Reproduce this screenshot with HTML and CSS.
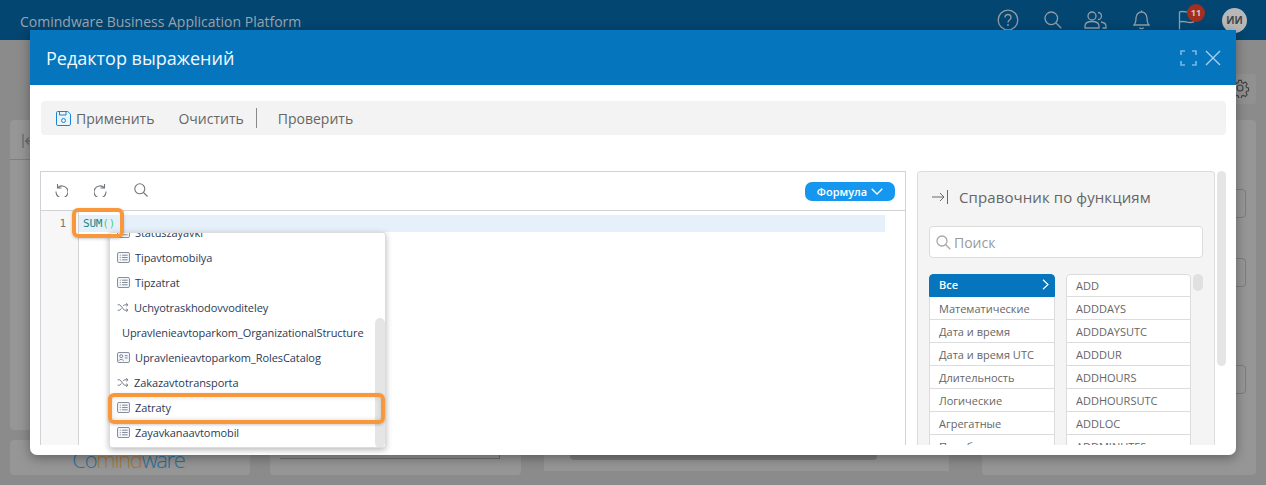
FILE: index.html
```html
<!DOCTYPE html>
<html lang="ru">
<head>
<meta charset="utf-8">
<title>Редактор выражений</title>
<link rel="stylesheet" href="styles.css">
</head>
<body>
<svg class="defs" width="0" height="0" aria-hidden="true">
  <symbol id="i-list" viewBox="0 0 14 12"><rect x="0.5" y="0.5" width="13" height="11" rx="1.5" fill="#f3f6fa" stroke="#77808c"/><path d="M3 3.5h1M3 6h1M3 8.5h1M5.5 3.5h6M5.5 6h6M5.5 8.5h6" stroke="#77808c" fill="none"/></symbol>
  <symbol id="i-shuffle" viewBox="0 0 13 10"><path d="M0 2h2.5l5 6H11M0 8h2.5l1.7-2M6 3.6 7.500 2H11M9.500 0.300 11.500 2 9.500 3.700M9.500 6.300 11.500 8 9.500 9.700" fill="none" stroke="#6e7680"/></symbol>
  <symbol id="i-person" viewBox="0 0 14 12"><rect x="0.500" y="0.500" width="13" height="11" rx="1.500" fill="#f3f6fa" stroke="#77808c"/><circle cx="4.500" cy="4.500" r="1.600" fill="none" stroke="#77808c"/><path d="M2 9.500c.5-2 4.500-2 5 0M8.500 4h3M8.500 6.500h3" fill="none" stroke="#77808c"/></symbol>
</svg>

<header class="topbar">
  <span class="app-title">Comindware Business Application Platform</span>
  <nav class="top-icons">
    <svg class="ti ti-help" viewBox="0 0 22 22"><circle cx="11" cy="11" r="9.800"/><path d="M8 8.500c0-4 6-4 6 0 0 2.500-3 2.500-3 5"/><circle class="dot" cx="11" cy="16" r="0.900"/></svg>
    <svg class="ti ti-search" viewBox="0 0 18 18"><circle cx="7.300" cy="7.300" r="6.300"/><path d="M12 12l5.300 5.300"/></svg>
    <svg class="ti ti-users" viewBox="0 0 23 18"><circle cx="8" cy="5" r="4"/><path d="M1 17v-2c0-3 3-4.500 7-4.500s7 1.500 7 4.500v2zM14 1.500a3.500 3.500 0 0 1 0 7M17 11c3 .5 5 1.800 5 4v2h-3.500"/></svg>
    <svg class="ti ti-bell" viewBox="0 0 17 20"><path d="M1 15c2-2 2-3.500 2-7 0-3.500 2.500-6 5.500-6s5.500 2.500 5.500 6c0 3.500 0 5 2 7zM8.500 2V.5M6.500 17.500c.5 1.500 3.500 1.500 4 0"/></svg>
    <span class="flag-wrap">
      <svg class="ti ti-flag" viewBox="0 0 17 20"><path d="M1.500 19.500V2c4-2 9 2 14 0v10c-5 2-10-2-14 0"/></svg>
      <span class="badge">11</span>
    </span>
    <span class="avatar">ИИ</span>
  </nav>
</header>

<main class="backdrop">
  <section class="card card-left">
    <div class="card-head"><svg class="collapse" viewBox="0 0 12 14"><path d="M1 0v14M11 7H4M7 3.500 3.500 7 7 10.500"/></svg></div>
  </section>
  <section class="card card-logo"><span class="logo">Co<span class="logo-mid">mind</span>ware</span></section>
  <section class="card card-second"><div class="inner-line"></div></section>
  <section class="card card-third"><div class="inner-bar"></div></section>
  <div class="right-col">
    <div class="gear-box">
      <svg class="gear" viewBox="0 0 20 20"><circle cx="10" cy="10" r="3"/><path d="M8.500 1.500h3l.5 2.500 1.800.8 2.200-1.400 2 2.100-1.400 2.200.8 1.800 2.100.5v3l-2.100.5-.8 1.800 1.400 2.200-2 2-2.200-1.300-1.800.7-.5 2.500h-3l-.5-2.500-1.800-.7-2.200 1.300-2-2 1.400-2.200-.8-1.800-2.100-.5v-3l2.100-.5.800-1.800-1.400-2.200 2-2.100 2.200 1.400 1.800-.8z" transform="translate(1 1) scale(.9)"/></svg>
    </div>
    <section class="card card-right">
      <div class="field f1"></div>
      <div class="field f2"></div>
      <div class="field f3"></div>
    </section>
  </div>
</main>

<div class="modal" role="dialog">
  <div class="modal-head">
    <h1 class="modal-title">Редактор выражений</h1>
    <div class="modal-actions">
      <svg class="maxi" viewBox="0 0 17 16"><path d="M1 5V1h4M12 1h4v4M16 11v4h-4M5 15H1v-4"/></svg>
      <svg class="close" viewBox="0 0 16 16"><path d="M1 1l14 14M15 1 1 15"/></svg>
    </div>
  </div>

  <div class="modal-body">
    <div class="toolbar">
      <button class="tb-btn tb-save">
        <svg class="save" viewBox="0 0 15 15"><path d="M1.800.5h10l2.700 2.700v10a1.300 1.300 0 0 1-1.300 1.300H1.800A1.300 1.300 0 0 1 .5 13.200V1.800A1.300 1.300 0 0 1 1.800.5zM3.500.5v3.500h6.500V.5"/><circle cx="7.500" cy="9.500" r="2"/></svg>
        Применить
      </button>
      <button class="tb-btn tb-clear">Очистить</button>
      <span class="tb-sep"></span>
      <button class="tb-btn tb-check">Проверить</button>
    </div>

    <div class="workspace">
      <section class="editor">
        <div class="ed-tools">
          <svg class="ed-i" viewBox="0 0 14 14"><path d="M3.500 1v4h4M3.600 4.800A6 6 0 1 1 2 8.500"/></svg>
          <svg class="ed-i" viewBox="0 0 14 14"><path d="M10.500 1v4h-4M10.400 4.800A6 6 0 1 0 12 8.500"/></svg>
          <svg class="ed-i" viewBox="0 0 14 14"><circle cx="5.800" cy="5.800" r="5"/><path d="M9.500 9.500l4 4"/></svg>
          <button class="mode">Формула<svg class="mode-chev" viewBox="0 0 12 7"><path d="M.7.700 6 6l5.300-5.300"/></svg></button>
        </div>
        <div class="code">
          <div class="gutter"><span class="ln">1</span></div>
          <div class="lines">
            <div class="active-line"><span class="fn">SUM</span><span class="par">()</span></div>
          </div>
        </div>

        <div class="ac">
          <ul class="ac-list">
            <li><svg class="ai"><use href="#i-list"/></svg>Statuszayavki</li>
            <li><svg class="ai"><use href="#i-list"/></svg>Tipavtomobilya</li>
            <li><svg class="ai"><use href="#i-list"/></svg>Tipzatrat</li>
            <li class="tight"><svg class="ai ai-s"><use href="#i-shuffle"/></svg>Uchyotraskhodovvoditeley</li>
            <li class="noicon">Upravlenieavtoparkom_OrganizationalStructure</li>
            <li><svg class="ai"><use href="#i-person"/></svg>Upravlenieavtoparkom_RolesCatalog</li>
            <li class="tight"><svg class="ai ai-s"><use href="#i-shuffle"/></svg>Zakazavtotransporta</li>
            <li><svg class="ai"><use href="#i-list"/></svg>Zatraty</li>
            <li><svg class="ai"><use href="#i-list"/></svg>Zayavkanaavtomobil</li>
          </ul>
          <span class="ac-thumb"></span>
        </div>
        <span class="mark mark-sum"></span>
        <span class="mark mark-row"></span>
      </section>

      <aside class="ref">
        <div class="ref-head">
          <svg class="ref-i" viewBox="0 0 16 14"><path d="M0 7h12M8 3l4 4-4 4M15.500 0v14"/></svg>
          <span>Справочник по функциям</span>
        </div>
        <div class="ref-search">
          <svg class="ref-s" viewBox="0 0 15 15"><circle cx="6" cy="6" r="5"/><path d="M9.800 9.800l4.500 4.500"/></svg>
          <span>Поиск</span>
        </div>
        <div class="ref-lists">
          <ul class="rl rl-cat">
            <li class="on">Все<svg class="on-chev" viewBox="0 0 7 11"><path d="M1 .7 6 5.500 1 10.300"/></svg></li>
            <li>Математические</li>
            <li>Дата и время</li>
            <li>Дата и время UTC</li>
            <li>Длительность</li>
            <li>Логические</li>
            <li>Агрегатные</li>
            <li>Преобразование</li>
          </ul>
          <ul class="rl rl-fn">
            <li>ADD</li>
            <li>ADDDAYS</li>
            <li>ADDDAYSUTC</li>
            <li>ADDDUR</li>
            <li>ADDHOURS</li>
            <li>ADDHOURSUTC</li>
            <li>ADDLOC</li>
            <li>ADDMINUTES</li>
          </ul>
          <span class="rl-thumb"></span>
        </div>
      </aside>
      <span class="ref-scroll"></span>
    </div>
  </div>
</div>
</body>
</html>
```

FILE: styles.css
```css
* { box-sizing: border-box; }
html, body { margin: 0; height: 100%; }
body {
  width: 1266px;
  height: 485px;
  overflow: hidden;
  background: #8b8b8b;
  font-family: "Open Sans", "Liberation Sans", sans-serif;
  color: #666;
}
.defs { display: block; height: 0; }
ul { list-style: none; margin: 0; padding: 0; }
button { font: inherit; border: 0; background: none; padding: 0; color: inherit; }

/* top bar */
.topbar {
  height: 40px;
  background: #034672;
  display: flex;
  align-items: center;
  justify-content: space-between;
  padding: 0 20px;
}
.app-title { font-size: 14px; color: #9aa5ae; position: relative; top: 1px; }
.top-icons { display: flex; align-items: center; }
.ti { fill: none; stroke: #929ca4; stroke-width: 1.300; display: block; }
.ti .dot { fill: #929ca4; stroke: none; }
.ti-help { width: 22px; height: 22px; margin-right: 25px; }
.ti-search { width: 18px; height: 18px; margin-right: 22px; }
.ti-users { width: 23px; height: 18px; margin-right: 26px; }
.ti-bell { width: 17px; height: 20px; margin-right: 28px; }
.flag-wrap { position: relative; display: block; margin-right: 27px; }
.ti-flag { width: 17px; height: 20px; }
.badge {
  position: absolute;
  left: 9px;
  top: -6px;
  width: 18px;
  height: 18px;
  border-radius: 50%;
  background: #a32e22;
  color: #d4c4c0;
  font-size: 9px;
  font-weight: 700;
  line-height: 17px;
  text-align: center;
}
.avatar {
  width: 25px;
  height: 25px;
  border-radius: 50%;
  background: #b8b8b8;
  color: #444;
  font-size: 10px;
  font-weight: 700;
  line-height: 25px;
  text-align: center;
  margin-right: -1px;
}

/* dimmed page behind the dialog */
.backdrop {
  display: grid;
  grid-template-columns: 260px 274px 438px 274px;
  grid-template-rows: 310px 35px;
  row-gap: 10px;
  padding: 80px 10px 0;
  height: 445px;
}
.card { background: #969696; border-radius: 4px; }
.card-left { grid-column: 1 / 4; grid-row: 1; width: 500px; }
.card-head { height: 40px; border-bottom: 1px solid #7f7f7f; padding: 14px 0 0 12px; }
.collapse { width: 12px; height: 14px; fill: none; stroke: #6a6a6a; stroke-width: 1.300; display: block; }
.card-logo { grid-column: 1; grid-row: 2; width: 240px; text-align: center; overflow: hidden; }
.logo {
  display: block;
  margin: 2px 3px 0 0;
  font-size: 22px;
  line-height: 34px;
  font-weight: 300;
  letter-spacing: -1.300px;
  color: #2c6f9b;
}
.logo-mid { color: #a7783f; }
.card-second { grid-column: 2; grid-row: 2; width: 251px; height: 35px; padding: 0 21px 0 10px; }
.inner-line { height: 19px; border-bottom: 1px solid #6f6f6f; border-right: 1px solid #6f6f6f; }
.card-third { grid-column: 3; grid-row: 2; width: 405px; height: 31px; border-radius: 0; padding: 0 72px 0 26px; }
.inner-bar { height: 20px; background: #7c7c7c; border-radius: 4px; }
.right-col {
  grid-column: 4;
  grid-row: 1 / 3;
  margin-top: -46px;
  display: flex;
  flex-direction: column;
  align-items: flex-end;
}
.gear-box { width: 20px; height: 30px; background: #919191; border-radius: 0 3px 3px 0; margin-bottom: 16px; position: relative; }
.gear { position: absolute; left: -6px; top: 4px; width: 20px; height: 20px; fill: none; stroke: #424242; stroke-width: 1.200; }
.card-right { width: 274px; height: 355px; padding-top: 69px; display: flex; flex-direction: column; align-items: flex-end; padding-right: 10px; }
.field { width: 40px; height: 29px; border: 1px solid #7c7c7c; border-radius: 4px; }
.f2 { margin-top: 40px; }
.f3 { margin-top: 78px; }

/* dialog */
.modal {
  position: absolute;
  left: 30px;
  top: 30px;
  width: 1206px;
  height: 425px;
  background: #fff;
  border-radius: 0 0 7px 7px;
  box-shadow: 0 3px 12px rgba(0, 0, 0, .35);
}
.modal-head {
  height: 55px;
  background: #0575bd;
  display: flex;
  align-items: center;
  justify-content: space-between;
  padding: 0 15px 0 16px;
}
.modal-title { margin: 0; font-size: 18px; font-weight: 400; color: #f2f8fc; }
.modal-actions { display: flex; align-items: center; gap: 8px; }
.maxi { width: 17px; height: 16px; fill: none; stroke: #74b6e6; stroke-width: 1.700; }
.close { width: 16px; height: 16px; fill: none; stroke: #a9d1ee; stroke-width: 1.400; }

.modal-body { padding: 16px 10px 0; }
.toolbar {
  margin-left: 1px;
  height: 34px;
  background: #f3f3f3;
  border-radius: 4px;
  display: flex;
  align-items: center;
  padding-left: 15px;
  font-size: 14px;
  letter-spacing: -0.100px;
  color: #666;
}
.tb-btn { display: flex; align-items: center; gap: 5px; }
.save { width: 15px; height: 15px; fill: #eaf3fa; stroke: #1a85ce; stroke-width: 1; }
.tb-clear { margin-left: 24px; }
.tb-sep { width: 1px; height: 20px; background: #888; margin: 0 21px 0 12px; }

.workspace { margin-top: 36px; display: flex; height: 274px; align-items: flex-start; }
.editor {
  position: relative;
  width: 866px;
  height: 274px;
  border: 1px solid #cfd3d8;
  border-bottom: 0;
}
.ed-tools {
  height: 39px;
  border-bottom: 1px solid #cfd3d8;
  display: flex;
  align-items: center;
  padding: 0 10px 0 13px;
  gap: 26px;
}
.ed-i { width: 14px; height: 14px; margin-bottom: 3px; fill: none; stroke: #6f7680; stroke-width: 1.100; }
.mode {
  margin-left: auto;
  width: 90px;
  height: 19px;
  background: #1597f0;
  border-radius: 7px;
  color: #fff;
  font-size: 11px;
  font-weight: 600;
  display: flex;
  align-items: center;
  justify-content: center;
  gap: 4px;
}
.mode-chev { width: 12px; height: 7px; fill: none; stroke: #fff; stroke-width: 1.300; }
.code { display: flex; height: 234px; }
.gutter {
  width: 38px;
  background: #f7f7f7;
  border-right: 1px solid #d4d4d4;
  font: 11px/17px "DejaVu Sans Mono", monospace;
  color: #777;
  text-align: right;
  padding: 4px 12px 0 0;
}
.lines { flex: 1; padding: 4px 20px 0 0; }
.active-line {
  height: 17px;
  background: #e6f0fb;
  padding-left: 4px;
  font: 11px/17px "DejaVu Sans Mono", monospace;
  letter-spacing: -0.200px;
}
.fn { color: #0b8a8a; }
.par { color: #4fd06a; }

.ac {
  position: absolute;
  left: 68px;
  top: 60px;
  width: 277px;
  height: 216px;
  background: #fff;
  border: 1px solid #dcdcdc;
  border-radius: 3px;
  box-shadow: 0 2px 6px rgba(0, 0, 0, .28);
  overflow: hidden;
}
.ac-list { margin-top: -13px; padding-left: 7px; }
.ac-list li {
  height: 25px;
  display: flex;
  align-items: center;
  gap: 5px;
  font-size: 11px;
  letter-spacing: -0.080px;
  color: #2b3a55;
  white-space: nowrap;
}
.ac-list li.tight { gap: 4px; }
.ac-list li.noicon { padding-left: 5px; }
.ai { width: 13px; height: 11px; flex: none; }
.ai-s { height: 9px; }
.ac-thumb {
  position: absolute;
  right: 0;
  top: 85px;
  width: 10px;
  height: 130px;
  background: #e5e5e5;
  border-radius: 5px;
}
.mark { position: absolute; border: 4px solid #f8983b; border-radius: 6px; pointer-events: none; }
.mark-sum { left: 31px; top: 36px; width: 52px; height: 30px; box-shadow: 0 1px 3px rgba(0, 0, 0, .2); }
.mark-row { left: 67px; top: 221px; width: 277px; height: 31px; box-shadow: 0 1px 3px rgba(0, 0, 0, .2), inset 0 0 5px rgba(0, 0, 0, .15); }

.ref {
  margin-left: 11px;
  width: 298px;
  height: 274px;
  background: #f4f4f4;
  border: 1px solid #dcdcdc;
  border-bottom: 0;
  border-radius: 4px 4px 0 0;
  padding: 0 11px 0 11px;
  overflow: hidden;
}
.ref-head {
  height: 50px;
  margin-bottom: 4px;
  display: flex;
  align-items: center;
  gap: 11px;
  padding-left: 3px;
  font-size: 15px;
  letter-spacing: 0.100px;
  color: #666;
}
.ref-i { width: 16px; height: 14px; fill: none; stroke: #6a6a6a; stroke-width: 1; }
.ref-search {
  height: 32px;
  background: #fff;
  border: 1px solid #dcdcdc;
  border-radius: 4px;
  display: flex;
  align-items: center;
  gap: 3px;
  padding-left: 6px;
  font-size: 14px;
  color: #9a9a9a;
}
.ref-s { width: 15px; height: 15px; fill: none; stroke: #a8a8a8; stroke-width: 1.300; }
.ref-lists { position: relative; margin-top: 16px; display: flex; gap: 11px; }
.rl { width: 126px; border-radius: 4px 4px 0 0; overflow: hidden; font-size: 11px; color: #666; }
.rl-fn { width: 125px; }
.rl li {
  height: 23px;
  padding: 0 0 0 9px;
  background: #fff;
  border: 1px solid #dcdcdc;
  border-top: 0;
  display: flex;
  align-items: center;
  justify-content: space-between;
}
.rl li:first-child { border-top: 1px solid #dcdcdc; border-radius: 4px 4px 0 0; }
.rl li.on { background: #0575bd; border-color: #0575bd; color: #fff; font-weight: 600; padding-right: 5px; padding-bottom: 2px; }
.on-chev { width: 7px; height: 11px; fill: none; stroke: #fff; stroke-width: 1.200; }
.rl-thumb {
  position: absolute;
  left: 264px;
  top: 0;
  width: 10px;
  height: 17px;
  background: #e0e0e0;
  border-radius: 5px;
}
.ref-scroll { margin-left: 2px; width: 9px; height: 195px; background: #e5e5e5; border-radius: 5px; }
```
